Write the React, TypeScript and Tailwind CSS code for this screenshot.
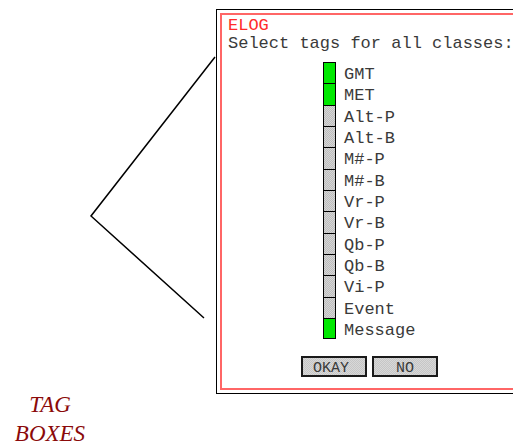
import React from 'react';

const TAGS = [
  { label: 'GMT', on: true },
  { label: 'MET', on: true },
  { label: 'Alt-P', on: false },
  { label: 'Alt-B', on: false },
  { label: 'M#-P', on: false },
  { label: 'M#-B', on: false },
  { label: 'Vr-P', on: false },
  { label: 'Vr-B', on: false },
  { label: 'Qb-P', on: false },
  { label: 'Qb-B', on: false },
  { label: 'Vi-P', on: false },
  { label: 'Event', on: false },
  { label: 'Message', on: true },
];

const mono = "font-['Liberation_Mono','DejaVu_Sans_Mono',monospace]";

const App: React.FC = () => {
  return (
    <div className="w-[513px] h-[442px] overflow-hidden bg-white flex">
      {/* Left side: callout lines + caption */}
      <div className="w-[216px] shrink-0 flex flex-col">
        <svg width="216" height="390" className="block shrink-0">
          <polyline
            points="215,57 91,216 204,318"
            fill="none"
            stroke="#000"
            strokeWidth="1.5"
          />
        </svg>
        <div className="w-[100px] shrink-0 text-center text-[23px] leading-[29px] italic text-[#8b0a0a] font-['Liberation_Serif',serif]">
          TAG
          <br />
          BOXES
        </div>
      </div>

      {/* Dialog */}
      <div className="mt-[9px] self-start w-[330px] shrink-0 border border-black p-[3px]">
        <div className="border-2 border-[#ff6666] pt-[2px] pb-[11px]">
          <div className={`${mono} text-[17px] leading-[18px] pl-[6px] whitespace-nowrap`}>
            <div className="text-[#ff2a2a]">ELOG</div>
            <div className="text-[#3a3a3a]">Select tags for all classes:</div>
          </div>

          {/* Tag list */}
          <div className="mt-[9px] ml-[101px] flex flex-col">
            {TAGS.map((t, i) => (
              <div key={t.label} className="flex items-stretch h-[21.33px]">
                <div
                  className={`w-[13px] border-x border-t border-black ${
                    i === TAGS.length - 1 ? 'border-b' : ''
                  } ${
                    t.on
                      ? 'bg-[#00e800]'
                      : 'bg-[repeating-conic-gradient(#bdbdbd_0_25%,#d6d6d6_0_50%)] bg-[length:2px_2px]'
                  }`}
                />
                <span className={`${mono} text-[17px] leading-[21px] pt-[2px] pl-[8px] text-[#3a3a3a]`}>
                  {t.label}
                </span>
              </div>
            ))}
          </div>

          {/* Buttons */}
          <div className="mt-[17px] ml-[79px] flex gap-[5px]">
            <button className={`${mono} w-[66px] h-[21px] border-2 border-[#1a1a1a] bg-[repeating-conic-gradient(#c6c6c6_0_25%,#d8d8d8_0_50%)] bg-[length:2px_2px] text-[15px] leading-[17px] pt-[2px] text-[#3a3a3a] pr-[6px]`}>
              OKAY
            </button>
            <button className={`${mono} w-[66px] h-[21px] border-2 border-[#1a1a1a] bg-[repeating-conic-gradient(#c6c6c6_0_25%,#d8d8d8_0_50%)] bg-[length:2px_2px] text-[15px] leading-[17px] pt-[2px] text-[#3a3a3a]`}>
              NO
            </button>
          </div>
        </div>
      </div>
    </div>
  );
};

export default App;
